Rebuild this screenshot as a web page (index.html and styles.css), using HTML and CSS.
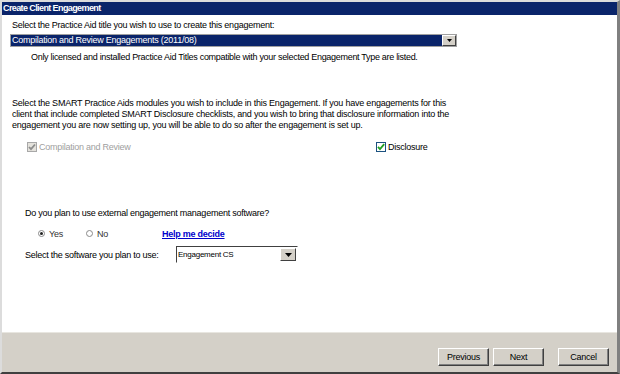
FILE: index.html
```html
<!DOCTYPE html>
<html lang="en">
<head>
  <meta charset="UTF-8" />
  <title>Create Client Engagement</title>
  <link rel="stylesheet" href="styles.css">
</head>
<body>
  <div class="window">
    <div class="titlebar">Create Client Engagement</div>

    <div class="content">
      <p class="label">Select the Practice Aid title you wish to use to create this engagement:</p>
      <div class="combo combo-wide selected">
        <span class="combo-text">Compilation and Review Engagements (2011/08)</span>
        <span class="combo-btn"><svg width="5" height="3" viewBox="0 0 5 3"><path d="M0 0h5L2.5 3z" fill="#000"/></svg></span>
      </div>
      <p class="note">Only licensed and installed Practice Aid Titles compatible with your selected Engagement Type are listed.</p>

      <p class="para">Select the SMART Practice Aids modules you wish to include in this Engagement. If you have engagements for this<br>
        client that include completed SMART Disclosure checklists, and you wish to bring that disclosure information into the<br>
        engagement you are now setting up, you will be able to do so after the engagement is set up.</p>

      <div class="modules">
        <label class="check disabled">
          <svg width="10" height="10" viewBox="0 0 10 10"><rect x="0.5" y="0.5" width="9" height="9" fill="#e4e2dc" stroke="#a8a8a8"/><path d="M2 5l2 2.2L8 2.5" fill="none" stroke="#8c8c8c" stroke-width="1.8"/></svg>
          Compilation and Review
        </label>
        <label class="check disclosure">
          <svg width="10" height="10" viewBox="0 0 10 10"><rect x="0.5" y="0.5" width="9" height="9" fill="#fff" stroke="#1c5180"/><path d="M2 4.8l2 2.4L8.2 2.2" fill="none" stroke="#21a121" stroke-width="1.8"/></svg>
          Disclosure
        </label>
      </div>

      <p class="question">Do you plan to use external engagement management software?</p>
      <div class="radios">
        <label class="radio"><span class="dot on"></span>Yes</label>
        <label class="radio"><span class="dot"></span>No</label>
        <a class="help" href="#">Help me decide</a>
      </div>
      <div class="software-row">
        <span>Select the software you plan to use:</span>
        <div class="combo combo-small">
          <span class="combo-text">Engagement CS</span>
          <span class="combo-btn"><svg width="7" height="4" viewBox="0 0 7 4"><path d="M0 0h7L3.5 4z" fill="#000"/></svg></span>
        </div>
      </div>
    </div>

    <div class="footer">
      <button class="btn">Previous</button>
      <button class="btn">Next</button>
      <button class="btn cancel">Cancel</button>
    </div>
  </div>
</body>
</html>
```

FILE: styles.css
```css
body {
  margin: 0;
  font-family: "Liberation Sans", Arial, sans-serif;
  font-size: 9px;
  letter-spacing: -0.25px;
  color: #000;
  background: #d4d0c8;
}
p { margin: 0; line-height: 11px; white-space: nowrap; }
.window {
  height: 374px;
  box-sizing: border-box;
  display: flex;
  flex-direction: column;
  border-top: 2px solid #dcdcdc;
  border-left: 2px solid #dcdcdc;
  border-right: 3px solid #808080;
  border-bottom: 2px solid #404040;
}
.titlebar {
  height: 13px;
  line-height: 13px;
  background: #0a246a;
  color: #fff;
  font-weight: bold;
  letter-spacing: -0.6px;
  padding-left: 1px;
}
.content {
  flex: 1;
  background: #fff;
  padding: 5px 0 0 8px;
}
.label { margin-left: 2px; }
.combo {
  display: flex;
  align-items: center;
  box-sizing: border-box;
  border: 1px solid #7f9db9;
  background: #fff;
}
.combo-wide {
  width: 447px;
  height: 13px;
  margin-top: 3px;
  border-color: #a0a0a0;
}
.combo-wide.selected .combo-text {
  background: #0a246a;
  color: #fff;
  align-self: stretch;
  line-height: 11px;
}
.combo-text {
  flex: 1;
  padding-left: 1px;
}
.combo-btn {
  display: flex;
  align-items: center;
  justify-content: center;
  box-sizing: border-box;
  background: #d4d0c8;
  border: 1px solid;
  border-color: #fff #404040 #404040 #fff;
  align-self: stretch;
}
.combo-wide .combo-btn { width: 14px; }
.note { margin: 5px 0 0 21px; letter-spacing: -0.3px; }
.para { margin: 35px 0 0 2px; letter-spacing: -0.22px; }
.modules {
  display: flex;
  margin: 10px 0 0 17px;
  height: 11px;
  align-items: center;
}
.check {
  display: flex;
  align-items: center;
  gap: 2px;
}
.check.disabled { color: #a0a0a0; width: 349px; }
.question { margin: 56px 0 0 15px; }
.radios {
  display: flex;
  align-items: center;
  height: 11px;
  margin: 9px 0 0 28px;
}
.radio {
  display: flex;
  align-items: center;
  gap: 4px;
  color: #333;
}
.radio:first-child { width: 48px; }
.radio:nth-child(2) { width: 76px; }
.dot {
  width: 7px;
  height: 7px;
  box-sizing: border-box;
  border: 1px solid #8a8a8a;
  border-radius: 50%;
  background: #fff;
  position: relative;
}
.dot.on::after {
  content: "";
  position: absolute;
  left: 1px;
  top: 1px;
  width: 3px;
  height: 3px;
  border-radius: 50%;
  background: #222;
}
.help {
  color: #0000cc;
  font-weight: bold;
}
.software-row {
  display: flex;
  align-items: center;
  margin: 7px 0 0 15px;
  height: 17px;
  white-space: nowrap;
}
.software-row > span { width: 151px; }
.combo-small {
  width: 122px;
  height: 17px;
  border-color: #404040 #fff #fff #404040;
  border-width: 1px;
  font-size: 8px;
}
.combo-small .combo-btn { width: 16px; margin: 1px; }
.footer {
  height: 40px;
  display: flex;
  justify-content: flex-end;
  align-items: flex-start;
  padding: 15px 8px 0 0;
  box-sizing: border-box;
  border-top: 1px solid #e8e6e0;
}
.btn {
  width: 51px;
  height: 18px;
  padding: 0;
  font-family: inherit;
  font-size: 9px;
  letter-spacing: -0.25px;
  color: #000;
  background: #d4d0c8;
  border: 1px solid;
  border-color: #fff #404040 #404040 #fff;
  box-shadow: inset -1px -1px 0 #808080;
  margin-left: 4px;
}
.btn.cancel { margin-left: 14px; }
```
